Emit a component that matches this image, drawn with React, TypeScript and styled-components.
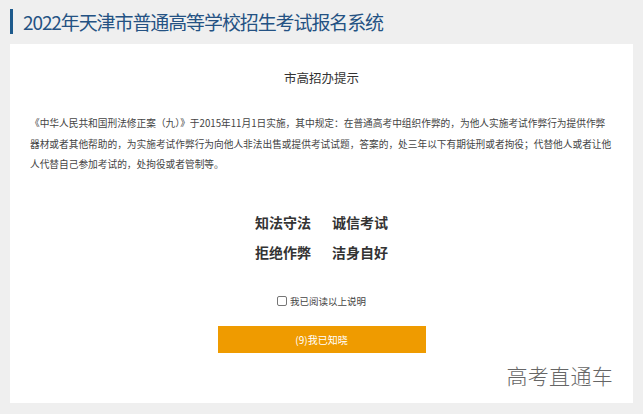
import { styled, createGlobalStyle } from 'styled-components';

const GlobalStyle = createGlobalStyle`
  html, body {
    margin: 0;
    padding: 0;
    background: #efefef;
    font-family: 'Noto Sans CJK SC', 'Noto Sans', sans-serif;
  }
`;

const Page = styled.div`
  width: 643px;
  height: 414px;
  background: #efefef;
  overflow: hidden;
  display: flex;
  flex-direction: column;
`;

const Header = styled.div`
  display: flex;
  align-items: center;
  height: 44px;
  padding-left: 10px;
  box-sizing: border-box;
  padding-bottom: 1px;
`;

const HeaderBar = styled.div`
  width: 3px;
  height: 25px;
  background: #1d5a8c;
  margin-right: 10px;
`;

const HeaderTitle = styled.h1`
  margin: 0;
  font-size: 19px;
  font-weight: 400;
  color: #245283;
  line-height: 25px;
  letter-spacing: -1.1px;
`;

const Panel = styled.div`
  position: relative;
  margin: 0 10px;
  height: 359px;
  background: #ffffff;
  display: flex;
  flex-direction: column;
  align-items: center;
  padding: 0 20px;
`;

const NoticeTitle = styled.h2`
  margin: 24px 0 0;
  font-size: 12.5px;
  font-weight: 400;
  line-height: 20px;
  color: #333;
`;

const Paragraph = styled.p`
  align-self: stretch;
  margin: 25px 0 0;
  font-size: 9.7px;
  line-height: 20.5px;
  color: #444;
`;

const Slogans = styled.div`
  margin-top: 32px;
  display: grid;
  grid-template-columns: auto auto;
  column-gap: 21px;
`;

const Slogan = styled.span`
  font-size: 14px;
  font-weight: 700;
  line-height: 30px;
  color: #333;
`;

const Agree = styled.label`
  margin-top: 26px;
  display: flex;
  align-items: center;
  gap: 3px;
  height: 16px;
  font-size: 9.5px;
  color: #444;
`;

const Box = styled.span`
  width: 8px;
  height: 8px;
  border: 1px solid #767676;
  border-radius: 2px;
  background: #fff;
`;

const ConfirmButton = styled.button`
  margin-top: 17px;
  width: 208px;
  height: 27px;
  border: none;
  background: #ef9b00;
  color: #fff;
  font-family: inherit;
  font-size: 10px;
  cursor: pointer;
`;

const Watermark = styled.div`
  position: absolute;
  right: 20px;
  bottom: 17px;
  font-size: 21px;
  line-height: 1;
  font-weight: 300;
  color: #666;
  letter-spacing: 0.3px;
`;

export default function App() {
  return (
    <Page>
      <GlobalStyle />
      <Header>
        <HeaderBar />
        <HeaderTitle>2022年天津市普通高等学校招生考试报名系统</HeaderTitle>
      </Header>
      <Panel>
        <NoticeTitle>市高招办提示</NoticeTitle>
        <Paragraph>
          《中华人民共和国刑法修正案（九）》于2015年11月1日实施，其中规定：在普通高考中组织作弊的，为他人实施考试作弊行为提供作弊器材或者其他帮助的，为实施考试作弊行为向他人非法出售或提供考试试题，答案的，处三年以下有期徒刑或者拘役；代替他人或者让他人代替自己参加考试的，处拘役或者管制等。
        </Paragraph>
        <Slogans>
          <Slogan>知法守法</Slogan>
          <Slogan>诚信考试</Slogan>
          <Slogan>拒绝作弊</Slogan>
          <Slogan>洁身自好</Slogan>
        </Slogans>
        <Agree>
          <Box />
          我已阅读以上说明
        </Agree>
        <ConfirmButton>(9)我已知晓</ConfirmButton>
        <Watermark>高考直通车</Watermark>
      </Panel>
    </Page>
  );
}
